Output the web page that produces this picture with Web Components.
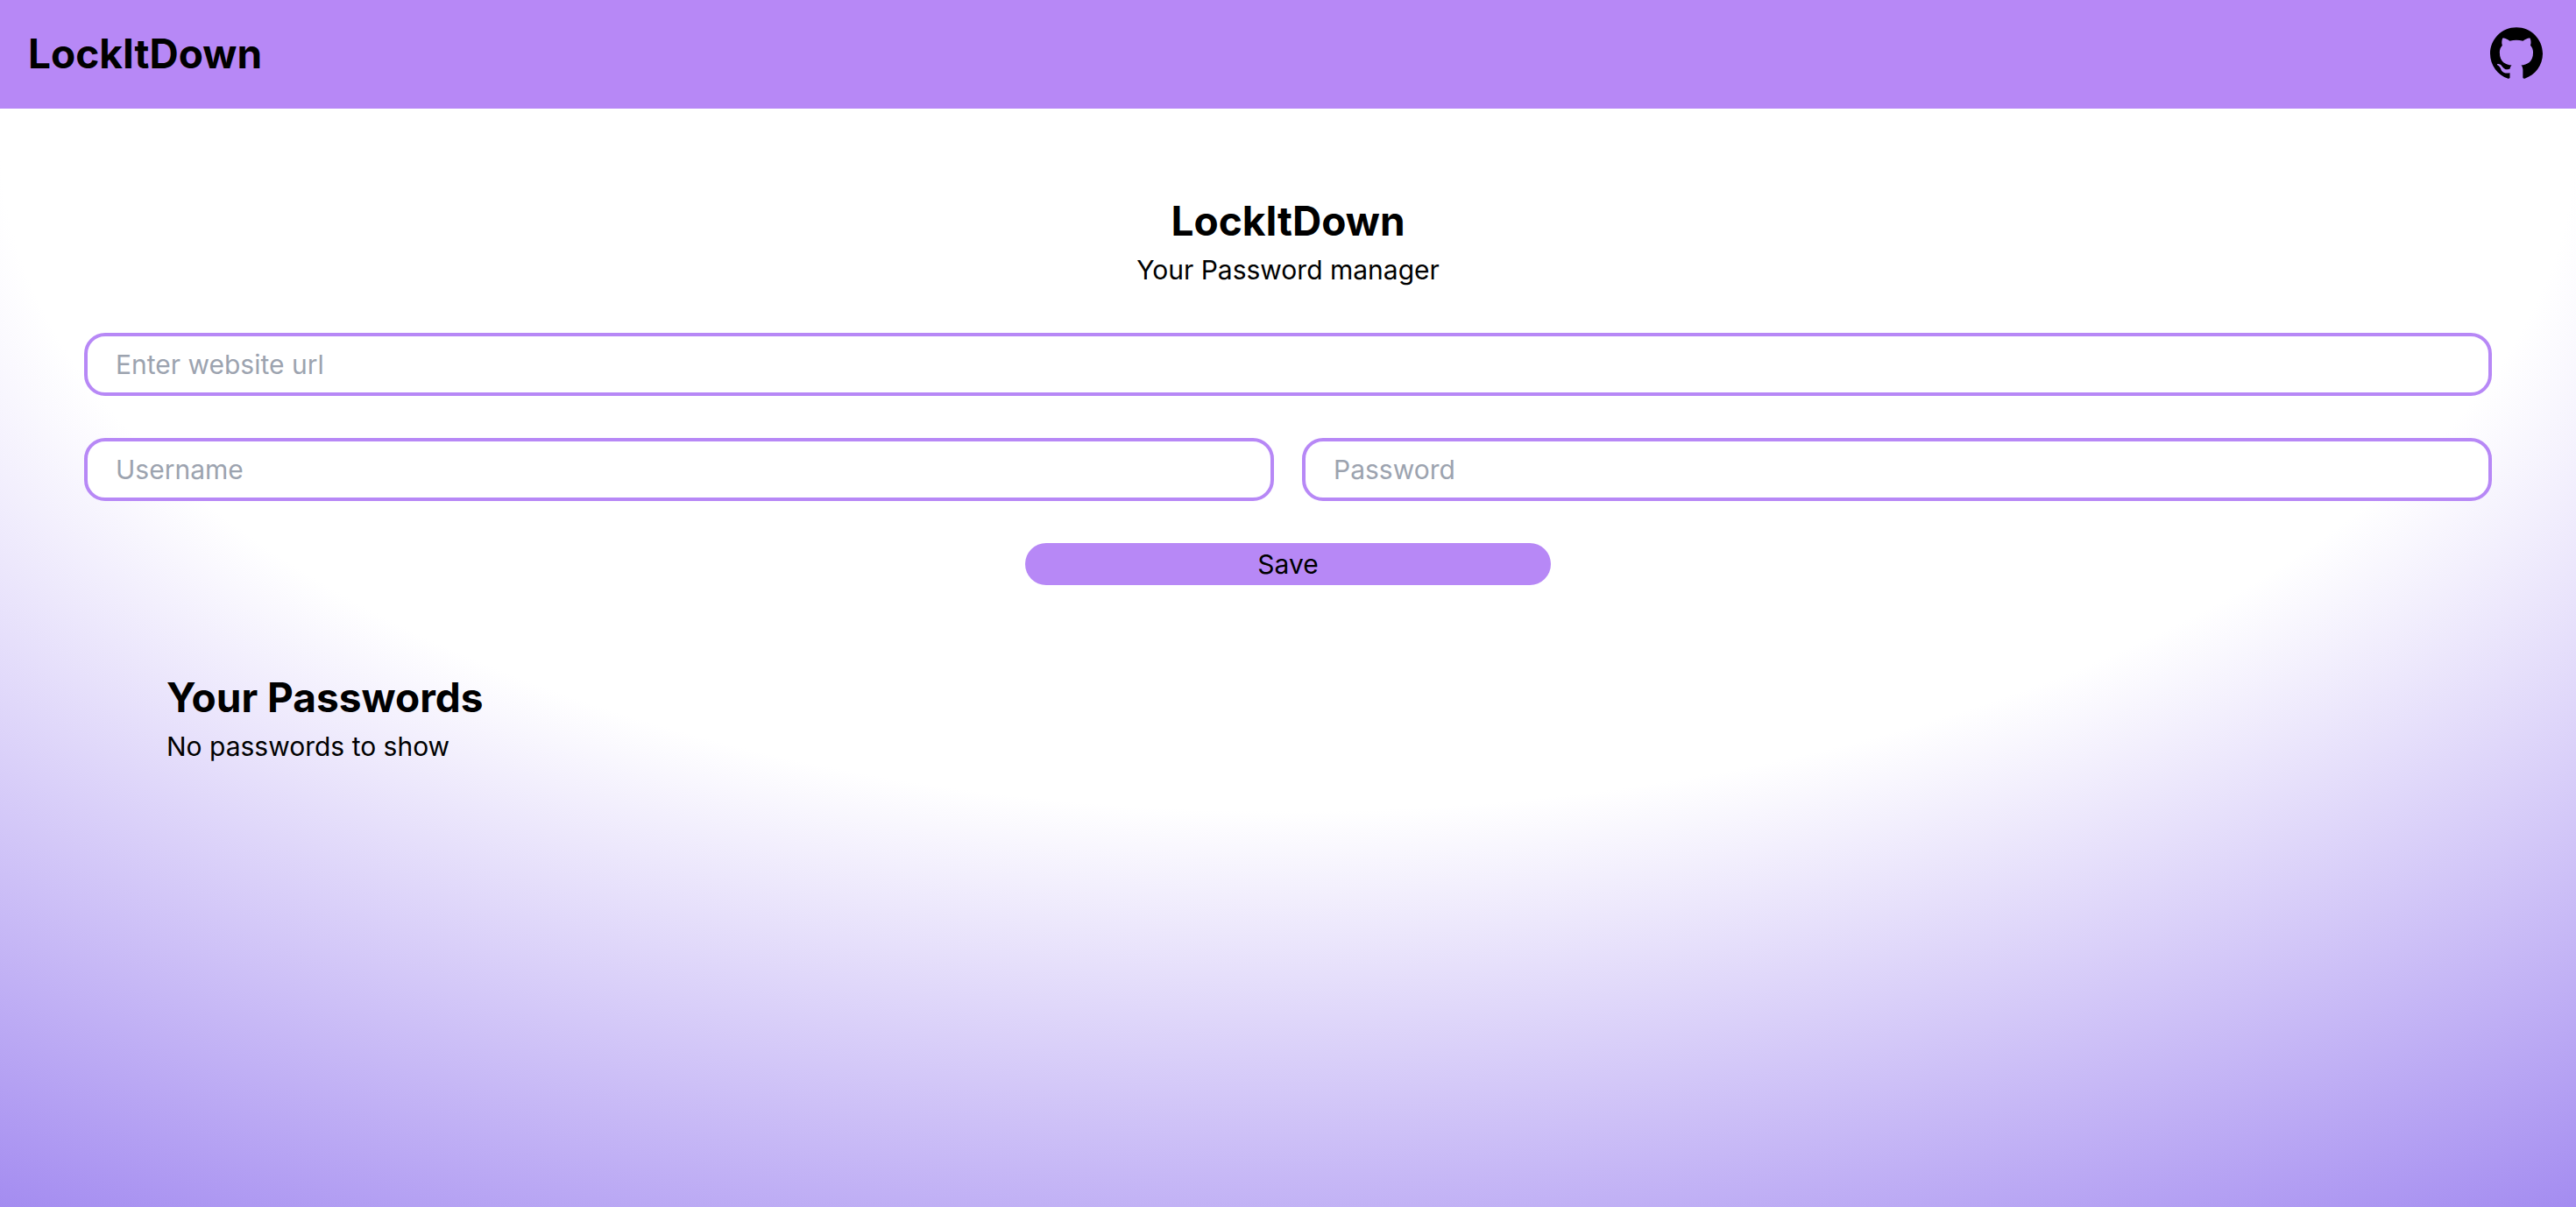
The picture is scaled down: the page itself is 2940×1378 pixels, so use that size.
<!DOCTYPE html>
<html lang="en">
<head>
<meta charset="utf-8">
<title>LockItDown</title>
<style>
  html, body { margin: 0; min-height: 100%; }
  body { font-family: Inter, "Liberation Sans", sans-serif; color: #000; }
</style>
</head>
<body>
<lock-app></lock-app>
<script>
const RESET = `*, *::before, *::after { box-sizing: border-box; } h1, h2, p { margin: 0; }`;

class LockBrand extends HTMLElement {
  constructor() {
    super();
    this.attachShadow({ mode: 'open' }).innerHTML = `
      <style>:host { display: block; font-size: 46px; line-height: 64px; font-weight: 700; }</style>
      <slot></slot>`;
  }
}
customElements.define('lock-brand', LockBrand);

class LockNav extends HTMLElement {
  constructor() {
    super();
    this.attachShadow({ mode: 'open' }).innerHTML = `
      <style>
        ${RESET}
        :host { display: block; background: #b788f6; }
        nav { display: flex; align-items: center; justify-content: space-between; height: 124px; padding: 0 32px 2px; }
        a { display: flex; padding: 4px; color: inherit; }
        svg { display: block; width: 64px; height: 64px; }
      </style>
      <nav>
        <lock-brand>LockItDown</lock-brand>
        <a href="https://github.com" aria-label="GitHub">
          <svg viewBox="0 0 64 64" fill="currentColor" aria-hidden="true">
            <path transform="translate(2 1.5) scale(2.5)" d="M12 .297c-6.63 0-12 5.373-12 12 0 5.303 3.438 9.8 8.205 11.385.6.113.82-.258.82-.577 0-.285-.01-1.04-.015-2.04-3.338.724-4.042-1.61-4.042-1.61C4.422 18.07 3.633 17.7 3.633 17.7c-1.087-.744.084-.729.084-.729 1.205.084 1.838 1.236 1.838 1.236 1.07 1.835 2.809 1.305 3.495.998.108-.776.417-1.305.76-1.605-2.665-.3-5.466-1.332-5.466-5.93 0-1.31.465-2.38 1.235-3.22-.135-.303-.54-1.523.105-3.176 0 0 1.005-.322 3.3 1.23.96-.267 1.98-.399 3-.405 1.02.006 2.04.138 3 .405 2.28-1.552 3.285-1.23 3.285-1.23.645 1.653.24 2.873.12 3.176.765.84 1.23 1.91 1.23 3.22 0 4.61-2.805 5.625-5.475 5.92.42.36.81 1.096.81 2.22 0 1.606-.015 2.896-.015 3.286 0 .315.21.69.825.57C20.565 22.092 24 17.592 24 12.297c0-6.627-5.373-12-12-12"/>
          </svg>
        </a>
      </nav>`;
  }
}
customElements.define('lock-nav', LockNav);

class LockField extends HTMLElement {
  connectedCallback() {
    if (this.shadowRoot) return;
    const label = this.getAttribute('label');
    const type = this.getAttribute('type') || 'text';
    this.attachShadow({ mode: 'open' }).innerHTML = `
      <style>
        ${RESET}
        :host { display: block; flex: 1; min-width: 0; }
        input { display: block; width: 100%; height: 72px; margin: 0; padding: 0 32px; border: 4px solid #b788f6; border-radius: 24px; background: #fff; color: #000; font: inherit; outline: none; }
        input::placeholder { color: #9ca3af; opacity: 1; }
      </style>
      <input type="${type}" aria-label="${label}" placeholder="${label}">`;
  }
}
customElements.define('lock-field', LockField);

class LockForm extends HTMLElement {
  constructor() {
    super();
    this.attachShadow({ mode: 'open' }).innerHTML = `
      <style>
        ${RESET}
        :host { display: block; }
        form { display: flex; flex-direction: column; gap: 48px; }
        .row { display: flex; gap: 32px; }
        button { align-self: center; width: 600px; height: 48px; padding: 0; border: 0; border-radius: 24px; background: #b788f6; color: #000; font: inherit; cursor: pointer; }
      </style>
      <form>
        <lock-field label="Enter website url"></lock-field>
        <div class="row">
          <lock-field label="Username"></lock-field>
          <lock-field label="Password" type="password"></lock-field>
        </div>
        <button type="button">Save</button>
      </form>`;
  }
}
customElements.define('lock-form', LockForm);

class LockApp extends HTMLElement {
  constructor() {
    super();
    this.attachShadow({ mode: 'open' }).innerHTML = `
      <style>
        ${RESET}
        :host { display: block; min-height: 100vh; font-size: 30px; line-height: 48px;
          background: radial-gradient(125% 125% at 50% 10%, #fff 40%, #633ae6 100%) 0 0 / 100% 112% no-repeat; }
        main { padding: 96px; }
        header { margin-bottom: 48px; text-align: center; }
        h1, h2 { font-size: 46px; line-height: 64px; font-weight: 700; }
        section { padding: 96px 94px 0; }
      </style>
      <lock-nav></lock-nav>
      <main>
        <header>
          <h1>LockItDown</h1>
          <p>Your Password manager</p>
        </header>
        <lock-form></lock-form>
        <section>
          <h2>Your Passwords</h2>
          <p>No passwords to show</p>
        </section>
      </main>`;
  }
}
customElements.define('lock-app', LockApp);
</script>
</body>
</html>
